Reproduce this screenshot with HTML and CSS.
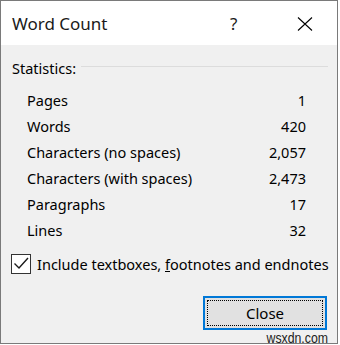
FILE: index.html
```html
<!DOCTYPE html>
<html lang="en">
<head>
  <meta charset="UTF-8">
  <meta name="viewport" content="width=device-width, initial-scale=1.0">
  <title>Word Count</title>
  <link rel="stylesheet" href="styles.css">
</head>
<body>

  <div class="dialog">
    <div class="titlebar">
      <span class="title">Word Count</span>
      <span class="help">?</span>
      <span class="close-x">
        <svg width="16" height="16" viewBox="0 0 16 16">
          <path d="M1 1.5 L15 14.5 M15 1.5 L1 14.5" stroke="#000" stroke-width="1.1" fill="none"/>
        </svg>
      </span>
    </div>

    <div class="content">
      <div class="group-head">
        <span>Statistics:</span>
        <span class="rule"></span>
      </div>

      <div class="stats">
        <span>Pages</span><span class="num">1</span>
        <span>Words</span><span class="num">420</span>
        <span>Characters (no spaces)</span><span class="num">2,057</span>
        <span>Characters (with spaces)</span><span class="num">2,473</span>
        <span>Paragraphs</span><span class="num">17</span>
        <span>Lines</span><span class="num">32</span>
      </div>

      <label class="check">
        <span class="box">
          <svg width="18" height="18" viewBox="0 0 18 18">
            <path d="M2.5 8.5 L7 13 L16 3" stroke="#1a1a1a" stroke-width="1.4" fill="none"/>
          </svg>
        </span>
        <span class="check-text">Include textboxes, <u>f</u>ootnotes and endnotes</span>
      </label>

      <div class="actions">
        <button type="button" class="btn"><span class="focus">Close</span></button>
      </div>
    </div>

    <span class="watermark">wsxdn.com</span>
  </div>

</body>
</html>
```

FILE: styles.css
```css
body {
  margin: 0;
  padding: 0;
  background-color: #fff;
  font-family: "Noto Sans", "Liberation Sans", sans-serif;
  color: #000;
}

.dialog {
  position: relative;
  width: 338px;
  height: 344px;
  box-sizing: border-box;
  border: 1px solid #7a7a7a;
  background-color: #f0f0f0;
}

.titlebar {
  display: flex;
  align-items: center;
  height: 44px;
  padding: 1px 0 0 11px;
  box-sizing: border-box;
  background-color: #fff;
  font-size: 17px;
}

.title {
  flex: 1;
  color: #1a1a1a;
}

.help {
  width: 10px;
  margin-right: 57px;
  color: #1a1a1a;
}

.close-x {
  display: flex;
  width: 16px;
  margin-right: 24px;
}

.content {
  padding: 13px 9px 0 11px;
  font-size: 14.5px;
}

.group-head {
  display: flex;
  line-height: 20px;
}

.rule {
  flex: 1;
  height: 1px;
  margin: 8px 0 0 5px;
  background-color: #dcdcdc;
}

.stats {
  display: grid;
  grid-template-columns: 1fr auto;
  line-height: 26px;
  margin: 9px 22px 0 15px;
}

.num {
  text-align: right;
}

.check {
  display: flex;
  align-items: center;
  gap: 6px;
  margin: 11px 0 0 -1px;
  line-height: 20px;
  white-space: nowrap;
}

.check-text {
  flex: none;
}

.box {
  display: flex;
  flex: none;
  align-items: center;
  justify-content: center;
  width: 20px;
  height: 20px;
  box-sizing: border-box;
  border: 1px solid #333;
  background-color: #fff;
}

.actions {
  display: flex;
  justify-content: flex-end;
  margin: 22px 1px 0 0;
}

.btn {
  width: 124px;
  height: 34px;
  padding: 2px;
  box-sizing: border-box;
  border: 2px solid #0078d7;
  background-color: #e1e1e1;
  font: inherit;
  font-size: 15px;
  color: #000;
}

.focus {
  display: flex;
  align-items: center;
  justify-content: center;
  height: 100%;
  box-sizing: border-box;
  border: 1px dotted #000;
}

.watermark {
  position: absolute;
  right: 9px;
  top: 328px;
  font-family: "Liberation Sans", sans-serif;
  font-size: 15px;
  color: #222;
  transform: scaleX(.82);
  transform-origin: right;
}
```
